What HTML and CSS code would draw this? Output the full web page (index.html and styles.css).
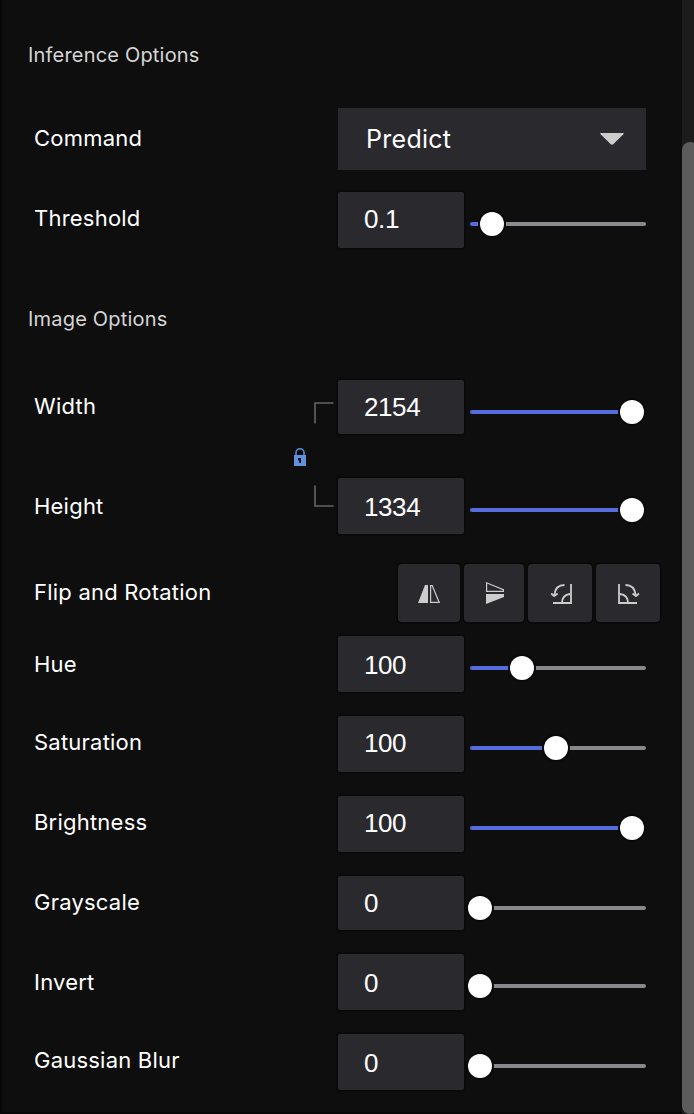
FILE: index.html
```
<!DOCTYPE html>
<html lang="en">
<head>
<meta charset="utf-8">
<title>Options</title>
<link rel="stylesheet" href="styles.css">
</head>
<body>
<main class="panel">
  <div class="content">
    <h2 class="heading">Inference Options</h2>
    <div class="row row-command">
      <span class="label">Command</span>
      <div class="select"><span>Predict</span>
        <svg class="caret" viewBox="0 0 24 12"><path d="M.8 0h22.4q1.2.4.2 1.3L13.500 11q-1.500 1.400-3 0L.6 1.300Q-.4.4.8 0z"/></svg>
      </div>
    </div>
    <div class="row row-threshold">
      <span class="label">Threshold</span>
      <div class="number">0.1</div>
      <div class="slider" style="--value:22px"><i class="thumb"></i></div>
    </div>
    <h2 class="heading heading-image">Image Options</h2>
    <div class="size">
      <div class="size-labels"><span class="label">Width</span><span class="label">Height</span></div>
      <svg class="link" viewBox="0 0 42 106">
        <path class="bracket" d="M41.500 1H23v20.500M23 83.500v20.500h18.500"/>
        <path class="shackle" d="M4 54v-3.300a4 4 0 0 1 8 0V54"/>
        <path class="lock" fill-rule="evenodd" d="M2 53h12v11H2zM6 56v2.500h1.200v2.500h1.800v-5z"/>
      </svg>
      <div class="size-controls">
        <div class="control"><div class="number short">2154</div><div class="slider" style="--value:162px"><i class="thumb"></i></div></div>
        <div class="control"><div class="number low">1334</div><div class="slider" style="--value:162px"><i class="thumb"></i></div></div>
      </div>
    </div>
    <div class="row row-flip">
      <span class="label">Flip and Rotation</span>
      <div class="buttons">
        <button class="tool" aria-label="Flip horizontally"><svg viewBox="0 0 24 24"><path class="solid" d="M1 22L8 4h3v18z"/><path class="line" d="M13.600 4.600h1.600l7 16.800h-8.600z"/></svg></button>
        <button class="tool" aria-label="Flip vertically"><svg viewBox="0 0 24 24"><path class="line" d="M4.600 1.800v8.600h16.800V8.600z"/><path class="solid" d="M4 13h18v3L4 23z"/></svg></button>
        <button class="tool" aria-label="Rotate left"><svg viewBox="0 0 24 24"><path class="stroke" d="M23 3v19H5M14 22q0-8 8-9M16.500 4Q7.500 4 6.300 14"/><path class="stroke" d="M3.200 12.500l3 2.500 3.500-2.500"/></svg></button>
        <button class="tool" aria-label="Rotate right"><svg viewBox="0 0 24 24"><path class="stroke" d="M3 3v19h18M12 22q0-8-8-9M9.500 4q9 0 10.200 10"/><path class="stroke" d="M16.500 12.500l3.500 2.500 3-2.500"/></svg></button>
      </div>
    </div>
    <div class="row row-hue"><span class="label low">Hue</span><div class="number low">100</div><div class="slider" style="--value:52px"><i class="thumb"></i></div></div>
    <div class="row"><span class="label">Saturation</span><div class="number">100</div><div class="slider" style="--value:86px"><i class="thumb"></i></div></div>
    <div class="row"><span class="label">Brightness</span><div class="number">100</div><div class="slider" style="--value:162px"><i class="thumb"></i></div></div>
    <div class="row row-gray"><span class="label">Grayscale</span><div class="number short">0</div><div class="slider" style="--value:10px"><i class="thumb"></i></div></div>
    <div class="row"><span class="label low">Invert</span><div class="number low">0</div><div class="slider" style="--value:10px"><i class="thumb"></i></div></div>
    <div class="row"><span class="label">Gaussian Blur</span><div class="number low">0</div><div class="slider" style="--value:10px"><i class="thumb"></i></div></div>
  </div>
  <div class="scrollbar"><div class="scroll-thumb"></div></div>
</main>
</body>
</html>
```
FILE: styles.css
```
* { box-sizing: border-box; }
body { margin: 0; background: #0e0e0e; }
.panel {
  display: flex;
  width: 694px;
  height: 1114px;
  overflow: hidden;
  font-family: Inter, sans-serif;
  font-weight: 400;
  color: #fff;
  border-left: 2px solid #080808;
}
.content { width: 680px; padding: 40px 0 0 32px; border-bottom: 2px solid #080808; }
.heading {
  margin: 0 0 0 -6px;
  height: 30px;
  font-size: 20px;
  line-height: 30px;
  font-weight: 400;
  letter-spacing: 0.19px;
  color: #d6d6d6;
}
.heading-image { margin-top: 24px; }
.row { display: flex; align-items: flex-start; height: 80px; }
.label {
  width: 304px;
  padding-top: 11px;
  font-size: 22px;
  line-height: 30px;
  letter-spacing: 0.22px;
}
.label.low { padding-top: 13px; }
.row-command { height: 84px; margin-top: 38px; }
.row-command .label { padding-top: 15px; }
.select {
  display: flex;
  align-items: center;
  justify-content: space-between;
  width: 308px;
  height: 62px;
  padding: 0 22px 0 28px;
  background: #2a292e;
  font-size: 25px;
  letter-spacing: 0.28px;
}
.caret { width: 24px; height: 12px; fill: #ccc; }
.row-threshold { height: 88px; }
.number {
  width: 126px;
  height: 56px;
  padding: 12px 0 0 26px;
  border-radius: 2px;
  background: #2a292e;
  box-shadow: 0 0 0 2px #0a0a0a;
  font: 26px/30px "Liberation Sans", Arial, sans-serif;
  letter-spacing: -0.4px;
}
.number.short { height: 54px; }
.number.low { padding-top: 14px; }
.slider {
  display: flex;
  align-items: center;
  width: 176px;
  height: 4px;
  margin: 30px 0 0 6px;
  border-radius: 2px;
  background: linear-gradient(90deg, #566bdc var(--value), #88888e var(--value));
}
.thumb {
  flex: none;
  width: 24px;
  height: 24px;
  margin-left: calc(var(--value) - 12px);
  border-radius: 50%;
  background: #fff;
  box-shadow: 0 0 0 2px #0a0a0a;
}
.size { display: flex; margin-top: 46px; height: 184px; }
.size-labels { display: flex; flex-direction: column; gap: 59px; width: 258px; }
.size-labels .label { width: auto; }
.link { width: 42px; height: 106px; margin: 22px 4px 0 0; }
.bracket { fill: none; stroke: #666; stroke-width: 1.6; }
.shackle { fill: none; stroke: #5d8fdd; stroke-width: 1.5; }
.lock { fill: #6090e0; }
.size-controls { display: grid; grid-template-rows: 98px 86px; }
.control { display: flex; align-items: flex-start; }
.row-flip { height: 72px; }
.row-flip .label { width: 364px; padding-top: 13px; }
.buttons { display: grid; grid-template-columns: 62px 60px 64px 64px; gap: 4px; }
.tool {
  height: 58px;
  padding: 0;
  display: grid;
  place-items: center;
  border: 0;
  border-radius: 4px;
  background: #2a292e;
  box-shadow: 0 0 0 2px #0a0a0a;
}
.tool svg { width: 24px; height: 24px; }
.solid { fill: #ccc; }
.line { fill: none; stroke: #ccc; stroke-width: 1.2; }
.stroke { fill: none; stroke: #ccc; stroke-width: 1.8; }
.row-gray { height: 78px; }
.scrollbar { width: 12px; height: 1114px; padding-top: 142px; background: #1c1c1c; overflow: hidden; }
.scroll-thumb { width: 16px; height: 972px; border-radius: 8px; background: #5c5c5c; }
```
